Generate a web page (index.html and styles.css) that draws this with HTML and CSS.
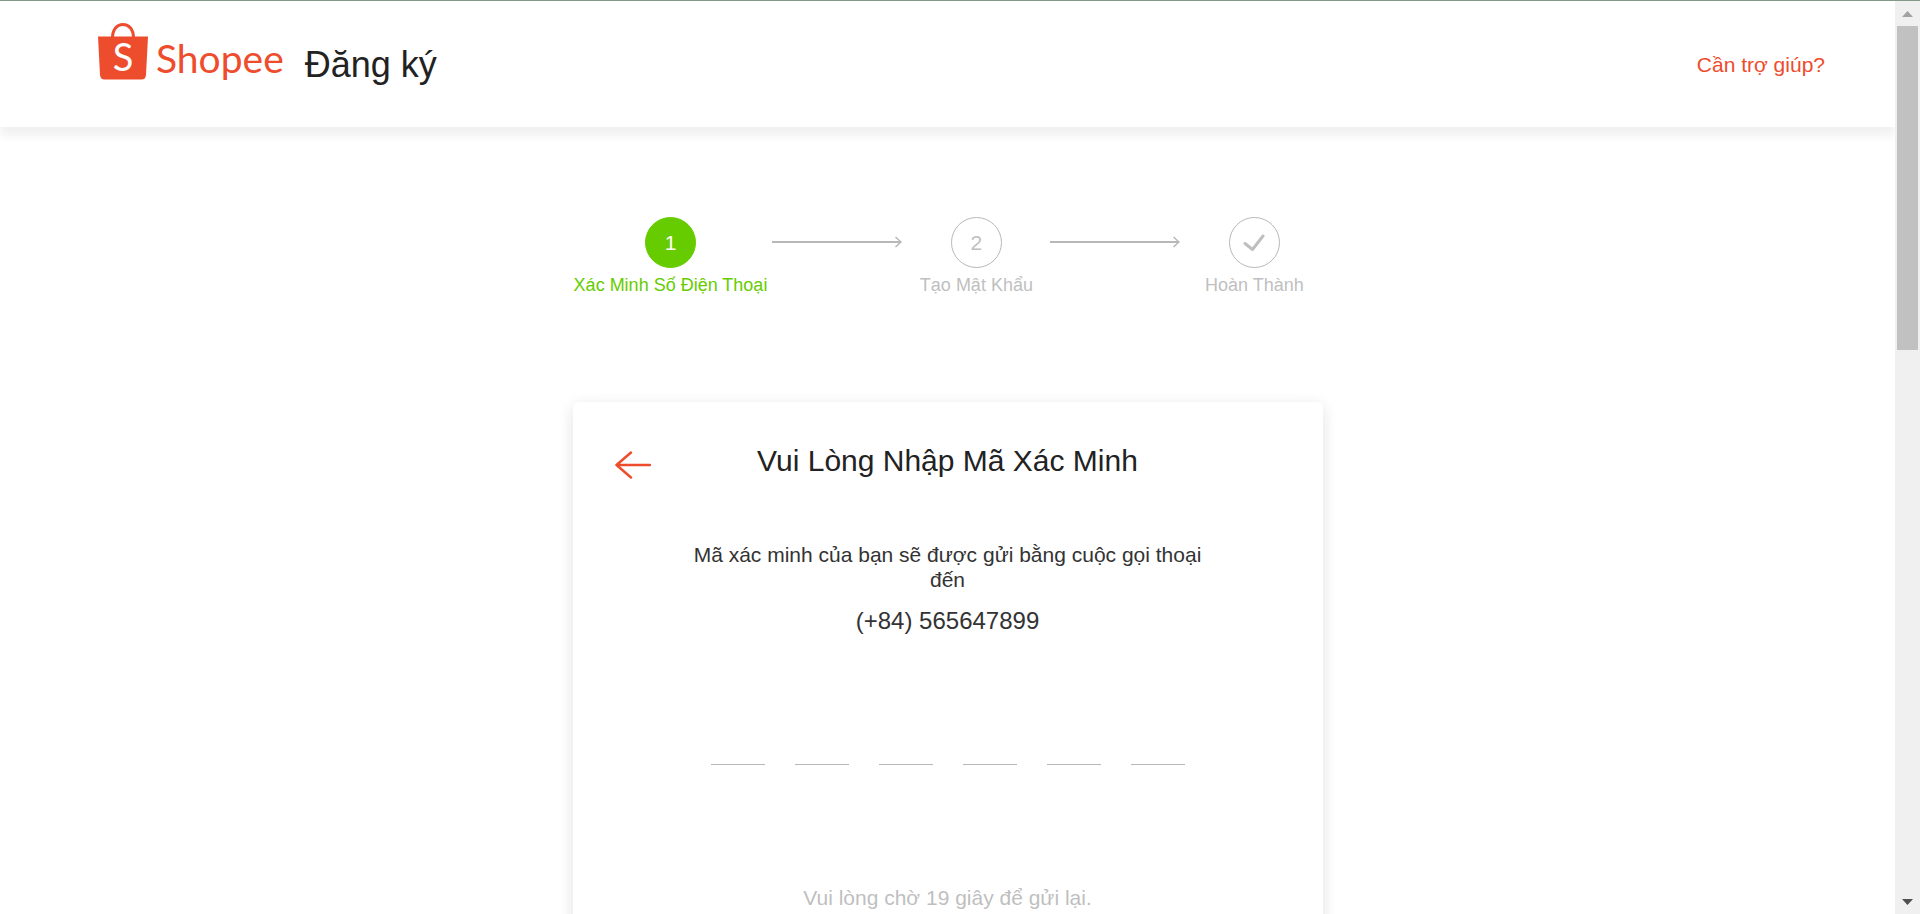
FILE: index.html
```html
<!DOCTYPE html>
<html lang="vi">
<head>
<meta charset="utf-8">
<title>Đăng ký | Shopee</title>
<link rel="stylesheet" href="styles.css">
</head>
<body>
<div class="page">
  <header class="header">
    <a class="brand" href="#" aria-label="Shopee">
      <svg class="bag" viewBox="0 0 50 57" aria-hidden="true">
        <path d="M14.5 15C14.5 6.500 19 1.500 25 1.500S35.500 6.500 35.500 15" fill="none" stroke="#ee4d2d" stroke-width="3"/>
        <path d="M0 13.500H50L48 52Q47.500 56.500 43.500 56.500H6.500Q2.500 56.500 2 52Z" fill="#ee4d2d"/>
        <text x="25" y="48" text-anchor="middle" class="bag-letter">S</text>
      </svg>
      <span class="wordmark">Shopee</span>
    </a>
    <h1 class="page-title">Đăng ký</h1>
    <a class="help" href="#">Cần trợ giúp?</a>
  </header>

  <main class="main">
    <ol class="steps">
      <li class="step step-active"><span class="badge">1</span><span>Xác Minh Số Điện Thoại</span></li>
      <li class="arrow" aria-hidden="true">
        <svg viewBox="0 0 130 12"><path d="M0 6H129" stroke-width="2"/><path d="M123.500 1L129 6L123.500 11"/></svg>
      </li>
      <li class="step"><span class="badge">2</span><span>Tạo Mật Khẩu</span></li>
      <li class="arrow" aria-hidden="true">
        <svg viewBox="0 0 130 12"><path d="M0 6H129" stroke-width="2"/><path d="M123.500 1L129 6L123.500 11"/></svg>
      </li>
      <li class="step">
        <span class="badge">
          <svg class="check" viewBox="0 0 22 18" aria-hidden="true"><path d="M2 9.500L9.500 15.500L20 2"/></svg>
        </span>
        <span>Hoàn Thành</span>
      </li>
    </ol>

    <form class="card">
      <div class="card-head">
        <button class="back" type="button" aria-label="Quay lại">
          <svg viewBox="0 0 36 28" aria-hidden="true"><path d="M35 14H1.500M16 1.500L1.500 14L16 26.500"/></svg>
        </button>
        <h2 class="card-title">Vui Lòng Nhập Mã Xác Minh</h2>
      </div>
      <p class="message">Mã xác minh của bạn sẽ được gửi bằng cuộc gọi thoại đến</p>
      <p class="phone">(+84) 565647899</p>
      <div class="code">
        <input type="text" maxlength="1" inputmode="numeric" aria-label="Số thứ 1">
        <input type="text" maxlength="1" inputmode="numeric" aria-label="Số thứ 2">
        <input type="text" maxlength="1" inputmode="numeric" aria-label="Số thứ 3">
        <input type="text" maxlength="1" inputmode="numeric" aria-label="Số thứ 4">
        <input type="text" maxlength="1" inputmode="numeric" aria-label="Số thứ 5">
        <input type="text" maxlength="1" inputmode="numeric" aria-label="Số thứ 6">
      </div>
      <p class="resend">Vui lòng chờ 19 giây để gửi lại.</p>
    </form>
  </main>
</div>
<div class="scrollbar" aria-hidden="true">
  <svg class="scroll-end" viewBox="0 0 25 25"><path d="M7 16L12.500 10L18 16Z" fill="#a3a3a3"/></svg>
  <div class="track"><div class="thumb"></div></div>
  <svg class="scroll-end" viewBox="0 0 25 25"><path d="M7 10L12.500 16L18 10Z" fill="#505050"/></svg>
</div>
</body>
</html>
```
FILE: styles.css
```css
* {
  box-sizing: border-box;
}

html {
  height: 100%;
  overflow: hidden;
}

body {
  margin: 0;
  height: 100%;
  display: flex;
  overflow: hidden;
  border-top: 1px solid #829a85;
  background: #fff;
  color: #222;
  font-family: "Liberation Sans", Arial, sans-serif;
}

h1, h2, p, ol {
  margin: 0;
  padding: 0;
  font-weight: 400;
}

a {
  color: #ee4d2d;
  text-decoration: none;
}

.page {
  flex: 1;
  overflow: hidden;
}

.header {
  display: flex;
  align-items: center;
  height: 126px;
  padding: 2px 70px 0 98px;
  box-shadow: 0 9px 9px rgba(0, 0, 0, 0.06);
}

.brand {
  display: flex;
  align-items: center;
  align-self: flex-start;
  gap: 8px;
  margin-top: 13px;
}

.bag {
  width: 50px;
  height: 57px;
}

.bag-letter {
  fill: #fff;
  font: 400 38px Lato, sans-serif;
}

.wordmark {
  font: 400 39px/57px Lato, sans-serif;
  padding-top: 14px;
}

.page-title {
  margin-left: 21px;
  font-size: 36px;
  line-height: 42px;
}

.help {
  margin-left: auto;
  font-size: 21px;
  line-height: 24px;
}

.main {
  padding-top: 90px;
}

.steps {
  display: flex;
  justify-content: center;
  padding-left: 2px;
  list-style: none;
  color: #bfbfbf;
}

.step {
  display: flex;
  flex-direction: column;
  align-items: center;
  gap: 6px;
  min-width: 148px;
  padding: 0 5px;
  font-size: 18px;
  line-height: 22px;
}

.badge {
  display: flex;
  align-items: center;
  justify-content: center;
  width: 51px;
  height: 51px;
  border: 1px solid #b8b8b8;
  border-radius: 50%;
  font-size: 21px;
}

.step-active {
  color: #6c0;
}

.step-active .badge {
  border-color: #6c0;
  background: #6c0;
  color: #fff;
}

.arrow {
  width: 130px;
  padding-top: 19px;
}

.arrow svg {
  display: block;
  fill: none;
  stroke: #b8b8b8;
  stroke-width: 1.5;
}

.check {
  width: 22px;
  height: 18px;
  fill: none;
  stroke: #bfbfbf;
  stroke-width: 3;
  stroke-linecap: round;
  stroke-linejoin: round;
}

.card {
  width: 750px;
  max-width: 100%;
  min-height: 720px;
  margin: 106px auto 0;
  padding-top: 38px;
  border-radius: 6px;
  background: #fff;
  box-shadow: 0 4px 15px rgba(0, 0, 0, 0.12);
  text-align: center;
}

.card-head {
  display: grid;
  grid-template-columns: 120px 1fr 120px;
  align-items: center;
}

.back {
  width: 36px;
  height: 28px;
  margin: 8px 0 0 42px;
  padding: 0;
  border: 0;
  background: none;
  cursor: pointer;
}

.back svg {
  display: block;
  fill: none;
  stroke: #ee4d2d;
  stroke-width: 2.5;
  stroke-linecap: round;
  stroke-linejoin: round;
}

.card-title {
  font-size: 30px;
  line-height: 42px;
}

.message {
  margin-top: 60px;
  padding: 0 120px;
  color: #333;
  font-size: 21px;
  line-height: 25px;
}

.phone {
  margin-top: 14px;
  color: #333;
  font-size: 24px;
  line-height: 30px;
}

.code {
  display: flex;
  justify-content: center;
  gap: 30px;
  margin-top: 75px;
}

.code input {
  width: 54px;
  height: 54px;
  padding: 0;
  border: 0;
  border-bottom: 1px solid #b8b8b8;
  background: none;
  outline: none;
  font-size: 30px;
  text-align: center;
}

.resend {
  margin-top: 120px;
  color: #bfbfbf;
  font-size: 21px;
  line-height: 26px;
}

.scrollbar {
  display: flex;
  flex-direction: column;
  width: 25px;
  background: #f0f0f0;
}

.scroll-end {
  width: 25px;
  height: 25px;
}

.track {
  display: flex;
  flex: 1;
  flex-direction: column;
  padding: 0 2px;
}

.track::after {
  content: "";
  flex: 5;
}

.thumb {
  flex: 3;
  background: #c1c1c1;
}
```
